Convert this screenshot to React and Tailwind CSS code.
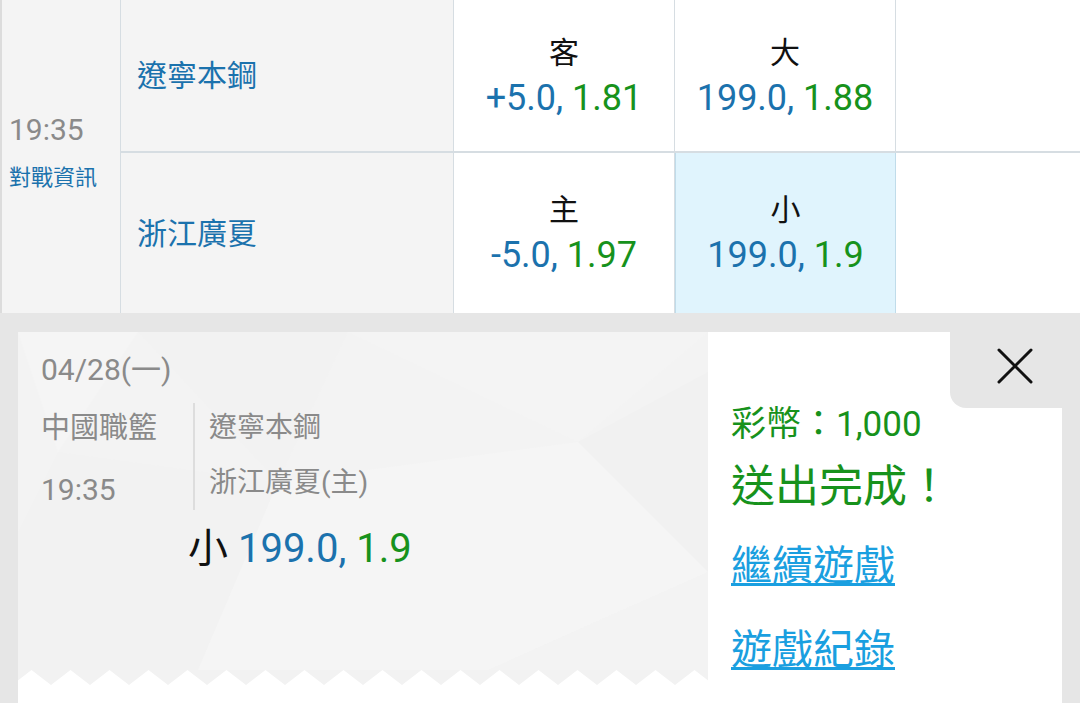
import React from 'react';

const cjk = { fontFamily: 'Roboto, "Noto Sans CJK TC", "Noto Sans CJK SC", sans-serif' };

const OddsCell = ({ label, line, price, active }) => (
  <div
    className={`flex flex-col items-center justify-center border-r border-[#d6dde2] ${
      active ? 'bg-[#e0f4fd] border-l border-l-[#c0dcea] border-r-[#c0dcea]' : 'bg-white'
    }`}
  >
    <div className="text-[30px] leading-[44px] text-[#111]">{label}</div>
    <div className="text-[36px] leading-[46px]">
      <span className="text-[#1b72ad]">{line}, </span>
      <span className="text-[#17921c]">{price}</span>
    </div>
  </div>
);

// zigzag edge at the bottom of the ticket
const Zigzag = () => (
  <svg width="690" height="15" viewBox="0 0 690 15" className="block">
    <defs>
      <pattern id="zz" width="39" height="15" patternUnits="userSpaceOnUse" x="-6">
        <path d="M0 0 H39 V15 L19.5 0 L0 15 Z" fill="#f2f2f2" />
      </pattern>
    </defs>
    <rect width="690" height="15" fill="#fff" />
    <rect width="690" height="15" fill="url(#zz)" />
  </svg>
);

const Pattern = () => (
  <svg className="absolute inset-0 h-full w-full" viewBox="0 0 690 338" preserveAspectRatio="none">
    <rect width="690" height="338" fill="#f3f3f3" />
    <polygon points="0,0 120,0 40,120" fill="#f5f5f5" />
    <polygon points="120,0 330,0 260,150" fill="#f2f2f2" />
    <polygon points="330,0 690,0 560,110" fill="#f4f4f4" />
    <polygon points="40,120 260,150 180,338 0,338 0,200" fill="#f2f2f2" />
    <polygon points="260,150 560,110 690,240 470,338 180,338" fill="#f5f5f5" />
    <polygon points="560,110 690,40 690,240" fill="#f1f1f1" />
    <polygon points="470,338 690,240 690,338" fill="#f3f3f3" />
  </svg>
);

export default function App() {
  return (
    <div className="w-[1080px] h-[703px] overflow-hidden bg-[#e6e6e6]" style={cjk}>
      {/* odds table */}
      <div className="grid grid-cols-[119px_333px_221px_221px_221px_1fr] grid-rows-[153px_160px] border-l-2 border-[#dcdcdc] bg-white">
        <div className="row-span-2 flex flex-col justify-center pl-[7px] pb-[12px] bg-[#f4f4f4] border-r border-[#d6dde2]">
          <div className="text-[30px] leading-[44px] text-[#8a8a8a]">19:35</div>
          <div className="mt-[11px] text-[22px] leading-[30px] text-[#1b72ad]">對戰資訊</div>
        </div>

        <div className="flex items-center pl-[16px] bg-[#f4f4f4] border-r border-b-2 border-[#d6dde2] text-[30px] text-[#1b72ad]">
          遼寧本鋼
        </div>
        <div className="border-b-2 border-[#d6dde2] grid">
          <OddsCell label="客" line="+5.0" price="1.81" />
        </div>
        <div className="border-b-2 border-[#d6dde2] grid">
          <OddsCell label="大" line="199.0" price="1.88" />
        </div>
        <div className="border-b-2 border-[#d6dde2] grid">
          <div className="bg-white border-r border-[#d6dde2]" />
        </div>
        <div className="border-b-2 border-[#d6dde2] bg-white" />

        <div className="flex items-center pl-[16px] bg-[#f4f4f4] border-r border-[#d6dde2] text-[30px] text-[#1b72ad]">
          浙江廣夏
        </div>
        <OddsCell label="主" line="-5.0" price="1.97" />
        <OddsCell label="小" line="199.0" price="1.9" active />
        <div className="bg-white border-r border-[#d6dde2]" />
        <div className="bg-white" />
      </div>

      {/* confirmation ticket */}
      <div className="pt-[19px] pl-[18px] pr-[18px]">
        <div className="flex h-[400px]">
          <div className="w-[690px] flex flex-col bg-white">
            <div className="relative h-[338px] overflow-hidden">
              <Pattern />
              <div className="relative pl-[23px] pt-[18px] text-[#8a8a8a]">
                <div className="text-[30px] leading-[40px]">04/28(一)</div>
                <div className="mt-[13px] flex">
                  <div className="w-[152px] flex flex-col">
                    <div className="text-[29px] leading-[40px] mt-[5px]">中國職籃</div>
                    <div className="text-[30px] leading-[40px] mt-[22px]">19:35</div>
                  </div>
                  <div className="border-l-2 border-[#dddddd] h-[107px] pl-[14px]">
                    <div className="text-[28px] leading-[40px] mt-[5px]">遼寧本鋼</div>
                    <div className="text-[28px] leading-[40px] mt-[15px]">浙江廣夏(主)</div>
                  </div>
                </div>
                <div className="pl-[147px] mt-[16px] text-[40px] leading-[46px]">
                  <span className="text-[#111]">小 </span>
                  <span className="text-[#1b72ad]">199.0, </span>
                  <span className="text-[#17921c]">1.9</span>
                </div>
              </div>
            </div>
            <Zigzag />
          </div>

          <div className="relative flex-1 bg-white">
            <button className="absolute right-0 top-0 w-[112px] h-[76px] bg-[#e6e6e6] rounded-bl-[16px] flex items-center justify-center pl-[17px] pb-[8px]">
              <svg width="36" height="36" viewBox="0 0 36 36" fill="none" stroke="#111" strokeWidth="3" strokeLinecap="round">
                <path d="M2 2 L34 34 M34 2 L2 34" />
              </svg>
            </button>
            <div className="pl-[23px] pt-[72px] text-[#17921c]">
              <div className="text-[35px] leading-[42px]">彩幣：1,000</div>
              <div className="text-[44px] leading-[56px] mt-[13px]">送出完成！</div>
              <div className="mt-[24px] text-[41px] leading-[54px] text-[#1a9fe0] underline decoration-[3px] underline-offset-[3px]">
                繼續遊戲
              </div>
              <div className="mt-[30px] text-[41px] leading-[54px] text-[#1a9fe0] underline decoration-[3px] underline-offset-[3px]">
                遊戲紀錄
              </div>
            </div>
          </div>
        </div>
      </div>
    </div>
  );
}
